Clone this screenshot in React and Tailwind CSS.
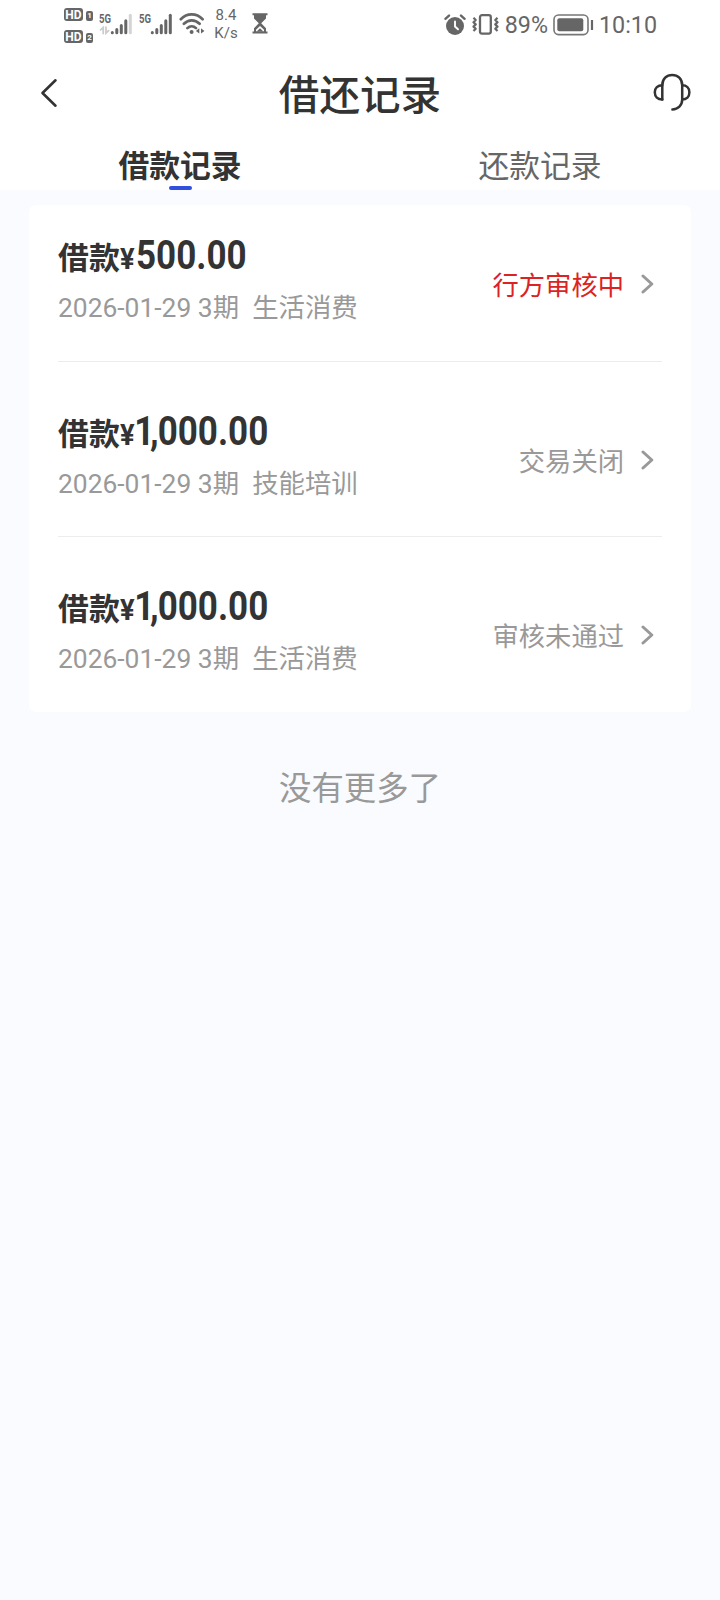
import { clsx } from "clsx";

const records = [
	{ amount: "500.00", date: "2026-01-29", term: "3期", usage: "生活消费", status: "行方审核中", active: true },
	{ amount: "1,000.00", date: "2026-01-29", term: "3期", usage: "技能培训", status: "交易关闭", active: false },
	{ amount: "1,000.00", date: "2026-01-29", term: "3期", usage: "生活消费", status: "审核未通过", active: false },
];

function HdBadge({ slot }) {
	return (
		<div className="flex h-3.5 items-end gap-[3px] font-bold">
			<span className="flex h-[13px] w-[19px] items-center justify-center rounded-[3px] bg-[#666] text-[12px] leading-none text-white">HD</span>
			<span className="flex h-[10px] w-[7px] items-center justify-center rounded-[2px] bg-[#666] text-[8px] leading-none text-white">{slot}</span>
		</div>
	);
}

function Signal({ data }) {
	return (
		<svg width="34" height="24" viewBox="0 0 34 24" fill="none" strokeWidth="3" strokeLinecap="round">
			<path d="M13.3 20.5v.2M17.8 17.5v3.2M22.3 13.5v7.2M26.8 8.8v11.9" stroke="#666" />
			<path d="M31.3 3.2v17.5" stroke={data ? "#d4d4d4" : "#666"} />
			{data && <path d="M4.2 21.5v-6l-2.6 2.4M7 15.2v6l2.6-2.6" stroke="#ccc" strokeWidth="1.8" />}
			<text x="0" y="10.5" fill="#666" stroke="none" fontSize="13" fontWeight="700" textLength="12" lengthAdjust="spacingAndGlyphs">5G</text>
		</svg>
	);
}

function Wifi() {
	return (
		<svg width="27" height="22" viewBox="0 0 27 22" fill="none" stroke="#666" strokeWidth="2.7" strokeLinecap="round">
			<path d="M1.8 6.2C8-.2 17.4-.2 23.6 6.2M4.9 10.8c4.7-4.7 11-4.7 15.7 0M8.4 15.1c2.6-2.5 6-2.5 8.6 0" />
			<circle cx="12.6" cy="19" r="2" fill="#666" stroke="none" />
			<path d="M20.3 15.2v5.4l-3.4-2.7zM22 15.2v5.4l3.4-2.7z" fill="#666" stroke="none" />
		</svg>
	);
}

function Hourglass() {
	return (
		<svg width="16" height="21" viewBox="0 0 16 21" fill="none" stroke="#666">
			<path d="M.5 1.3h15M.5 19.6h15" strokeWidth="2" />
			<path d="M2 2h12v3.5L9.2 10.3 14 15.2V19H2v-3.8l4.8-4.9L2 5.5z" fill="#666" stroke="none" />
			<path d="M8 13 4 16.8v1.4h8v-1.4z" fill="#fff" stroke="none" />
			<path d="m8 15.2 3.4 3.4H4.6z" fill="#666" stroke="none" />
		</svg>
	);
}

function AlarmClock() {
	return (
		<svg width="22" height="22" viewBox="0 0 22 22" fill="none" strokeLinecap="round" strokeLinejoin="round">
			<circle cx="11" cy="12" r="9" fill="#666" />
			<path d="M1.4 4.8 5 1.6M20.6 4.8 17 1.6" stroke="#666" strokeWidth="2.4" />
			<path d="M11 7.5v5l3 2.8" stroke="#fff" strokeWidth="1.9" />
		</svg>
	);
}

function Vibrate() {
	return (
		<svg width="27" height="21" viewBox="0 0 27 21" fill="none" stroke="#666" strokeWidth="2.2" strokeLinejoin="round">
			<rect x="8" y="1.2" width="10.8" height="18.4" rx="2" strokeWidth="2.3" />
			<path d="m1.5 3.8 2.2 2.2-2.2 2.2 2.2 2.2-2.2 2.2 2.2 2.2-2.2 2.2M25.5 3.8 23.3 6l2.2 2.2-2.2 2.2 2.2 2.2-2.2 2.2 2.2 2.2" />
		</svg>
	);
}

function Battery() {
	return (
		<svg width="41" height="22" viewBox="0 0 41 22" fill="none">
			<rect x="1" y="1" width="34" height="19.6" rx="4.5" stroke="#777" strokeWidth="1.6" />
			<rect x="4.3" y="4.3" width="26" height="13" rx="2" fill="#666" />
			<path d="M39 6v10" stroke="#666" strokeWidth="2.2" />
		</svg>
	);
}

function StatusBar() {
	return (
		<div className="flex h-[50px] items-start pr-[63px] pl-16 text-[#666]">
			<div className="mt-[7px] flex flex-col gap-2">
				<HdBadge slot="1" />
				<HdBadge slot="2" />
			</div>
			<div className="mt-[12px] ml-[6px] flex gap-[6px]">
				<Signal data />
				<Signal />
			</div>
			<div className="mt-[13px] ml-[6px]"><Wifi /></div>
			<div className="mt-[6px] ml-[8px] w-6 text-center text-[15px] leading-[18px]">
				<div>8.4</div>
				<div>K/s</div>
			</div>
			<div className="mt-[13px] ml-[14px]"><Hourglass /></div>
			<div className="mt-[13px] ml-auto flex items-center">
				<AlarmClock />
				<div className="ml-[6px]"><Vibrate /></div>
				<span className="mt-px ml-[6px] text-[23.3px] leading-[22px]">89%</span>
				<div className="ml-[5px]"><Battery /></div>
				<span className="mt-px ml-[5px] text-[23.3px] leading-[22px]">10:10</span>
			</div>
		</div>
	);
}

function Header() {
	return (
		<header className="grid h-[90px] grid-cols-[1fr_auto_1fr] items-center pr-[29px] pl-[29px]">
			<svg className="mt-[-4px] ml-[11px]" width="38" height="30" viewBox="0 0 38 30" fill="none" stroke="#333" strokeWidth="2.6" strokeLinecap="round" strokeLinejoin="round">
				<path d="M15.5 2.3 2.5 15l13 12.7" />
			</svg>
			<h1 className="mt-px text-[40.6px] leading-[60px] font-medium text-[#333]">借还记录</h1>
			<svg className="mt-[-6px] justify-self-end" width="38" height="38" viewBox="0 0 38 38" fill="none" stroke="#333" strokeWidth="2.5" strokeLinecap="round" strokeLinejoin="round">
				<path d="M9.3 26.5V12.2C9.3 6 13.6 1.9 19.2 1.9S29.2 6 29.2 12.2v14.3c0 5.8-4.2 9.9-9.8 9.9" />
				<path d="M9.3 12.2c-4.6 0-7.5 2.8-7.5 7.1s2.9 7.2 7.5 7.2M29.2 12.2c4.3 0 7.2 2.8 7.2 7.1s-2.9 7.2-7.2 7.2" />
			</svg>
		</header>
	);
}

function Tabs() {
	return (
		<nav className="grid h-[50px] grid-cols-2 text-[30.8px] leading-[38px]">
			<div className="flex flex-col items-center pt-2 font-bold text-[#333]">
				借款记录
				<div className="h-1 w-[23px] rounded-full bg-[#324fdd]" />
			</div>
			<div className="flex flex-col items-center pt-2 text-[#666]">还款记录</div>
		</nav>
	);
}

function Amount({ value }) {
	const [thousands, rest] = value.includes(",") ? value.split(",") : ["", value];

	return (
		<span className="ml-px inline-block origin-left scale-x-[0.875] text-[40px] leading-[46px]">
			{thousands && <span className="-ml-0.5"><span className="tracking-[-5px]">{thousands}</span><span className="tracking-[-1px]">,</span></span>}
			{rest}
		</span>
	);
}

function RecordRow({ record, first }) {
	return (
		<div className={clsx("flex justify-between", first ? "h-[156px] pt-[28px]" : "h-[175.3px] border-t border-[#ececec] pt-[47px]")}>
			<div>
				<div className="flex h-[46px] items-baseline font-bold text-[#333]">
					<span className="text-[30.9px] leading-[46px]">借款</span>
					<span className="w-[15px] text-[30px] leading-[46px]"><span className="inline-block origin-left scale-x-[0.91]">¥</span></span>
					<Amount value={record.amount} />
				</div>
				<div className="mt-[10px] text-[26.4px] leading-[38px] whitespace-pre text-[#999]">
					{record.date} {record.term}{"  "}{record.usage}
				</div>
			</div>
			<div className="mt-[32px] mr-[8px] flex h-[38px] items-center gap-[17px]">
				<span className={clsx("mt-[3px] text-[26.3px] leading-[38px]", record.active ? "text-[#dc2323]" : "text-[#999]")}>{record.status}</span>
				<svg width="13" height="20" viewBox="0 0 13 20" fill="none" stroke="#999" strokeWidth="3" strokeLinecap="round" strokeLinejoin="round">
					<path d="m2 2 8.8 8L2 18" />
				</svg>
			</div>
		</div>
	);
}

export default function App() {
	return (
		<div className="flex min-h-[1600px] w-[720px] flex-col bg-[#f9fbff] font-['Roboto','Noto_Sans_CJK_SC',sans-serif]">
			<div className="bg-white">
				<StatusBar />
				<Header />
				<Tabs />
			</div>
			<main className="mx-[29px] mt-[15px] h-[507px] rounded-[7px] bg-white px-[29px]">
				{records.map((record, index) => (
					<RecordRow key={index} record={record} first={index === 0} />
				))}
			</main>
			<p className="mt-[53px] text-center text-[32.4px] leading-[48px] text-[#999]">没有更多了</p>
		</div>
	);
}
